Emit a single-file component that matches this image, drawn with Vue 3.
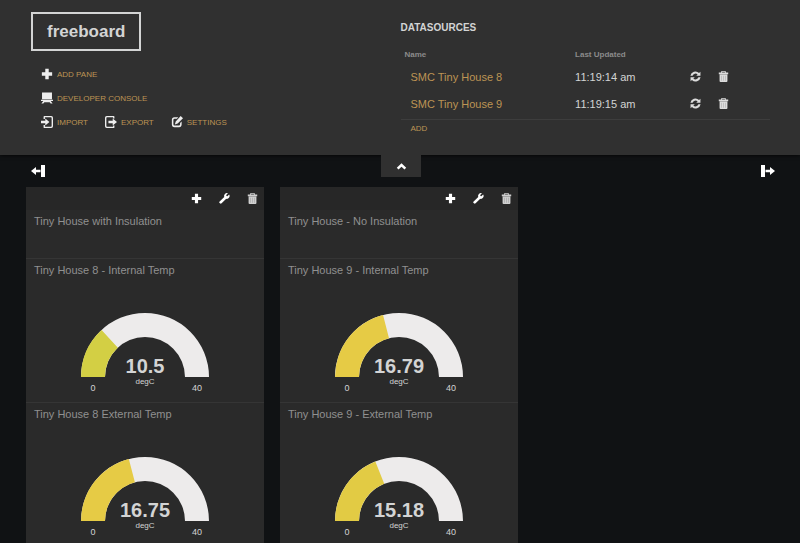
<script setup>
import { h } from 'vue'

const shapes = {
  plus: 'M5 1h4v4h4v4H9v4H5V9H1V5h4z',
  trash: 'M5 0h4a1 1 0 0 1 1 1v1h3v2H1V2h3V1a1 1 0 0 1 1-1zM5.2 1.1V2h3.6v-.9zM2 4.6h10v8.2q0 1.2-1.2 1.2H3.2Q2 14 2 12.8zM4.2 6v6.5h.2V6zm2.700 0v6.500h.2V6zm2.700 0v6.500h.2V6z',
  wrench: 'M12.9 1.9l-2.3 2.2-1.1-.3-.3-1.1L11.4.4A3.6 3.6 0 0 0 6.7 5L.8 10.700a1.500 1.500 0 0 0 0 2.100l.4.4a1.500 1.500 0 0 0 2.100 0L9.200 7.400a3.600 3.600 0 0 0 3.700-5.500z',
  refresh: 'M.5 6a6.500 6.500 0 0 1 11-3.500L13.300.8V6.200H7.900l1.800-1.800A3.800 3.800 0 0 0 3.300 6zM13.500 8a6.500 6.500 0 0 1-11 3.500L.7 13.200V7.800h5.400L4.300 9.600A3.800 3.800 0 0 0 10.700 8z',
  console: 'M1.200 .5h11.600v8H1.200zM0 9h14v1.500h-2.600L13.500 13.500h-2.200l-1.200-1.500H3.900l-1.200 1.500H.5l2.100-3H0z',
  import: 'M4 0h8q2 0 2 2v10q0 2-2 2H4q-1 0-1-1v-2.500h1.600v1.900h7q.8 0 .8-.8V2.400q0-.8-.8-.8h-7v1.900H3V1q0-1 1-1zM0 5.500h5V2.800l4.800 4.200L5 11.200V8.500H0z',
  export: 'M2 0h8q1 0 1 1v2H9.400V1.600h-7q-.8 0-.8.8v9.200q0 .8.8.8h7V11H11v2q0 1-1 1H2q-2 0-2-2V2q0-2 2-2zM4 5.500h5V2.800l5 4.200-5 4.200V8.500H4z',
  edit: 'M4 1.500h4.500L6.800 3.300H4.200Q2.800 3.300 2.800 4.700v5q0 1.500 1.400 1.500h5q1.400 0 1.400-1.500V8.300L12.400 6.500V10q0 3-3 3H4q-3 0-3-3V4.500q0-3 3-3zM11.300 0L14 2.500 7.800 8.800 4.500 10l1-3.500z',
  up: 'M7 3l6 5.500-2.200 2.200L7 7.200l-3.800 3.500L1 8.500z',
}

const Icon = (props) =>
  h('svg', { viewBox: '0 0 14 14', class: 'icon', 'aria-hidden': 'true' }, [
    h('path', { d: shapes[props.name], fill: 'currentColor', 'fill-rule': 'evenodd' }),
  ])
Icon.props = ['name']

const actions = [
  [{ icon: 'plus', label: 'ADD PANE' }],
  [{ icon: 'console', label: 'DEVELOPER CONSOLE' }],
  [
    { icon: 'import', label: 'IMPORT' },
    { icon: 'export', label: 'EXPORT' },
    { icon: 'edit', label: 'SETTINGS' },
  ],
]

const datasources = [
  { name: 'SMC Tiny House 8', updated: '11:19:14 am' },
  { name: 'SMC Tiny House 9', updated: '11:19:15 am' },
]

const panes = [
  {
    title: 'Tiny House with Insulation',
    gauges: [
      { title: 'Tiny House 8 - Internal Temp', value: 10.5, color: '#d3cf44' },
      { title: 'Tiny House 8 External Temp', value: 16.75, color: '#e6cb45' },
    ],
  },
  {
    title: 'Tiny House - No Insulation',
    gauges: [
      { title: 'Tiny House 9 - Internal Temp', value: 16.79, color: '#e6cb45' },
      { title: 'Tiny House 9 - External Temp', value: 15.18, color: '#e2cb44' },
    ],
  },
]

const MAX = 40

// Ring segment from the left end of the half circle up to the given fraction.
function arc(fraction) {
  const cx = 80
  const cy = 68
  const outer = 64
  const inner = 40
  const a = Math.PI * (1 - fraction)
  const at = (r) => `${(cx + r * Math.cos(a)).toFixed(2)} ${(cy - r * Math.sin(a)).toFixed(2)}`
  return `M${cx - outer} ${cy}A${outer} ${outer} 0 0 1 ${at(outer)}L${at(inner)}A${inner} ${inner} 0 0 0 ${cx - inner} ${cy}Z`
}
</script>

<template>
  <div class="page">
    <header class="admin">
      <div class="left">
        <h1 class="logo">freeboard</h1>
        <nav class="actions" aria-label="Board">
          <div v-for="(row, i) in actions" :key="i" class="action-row">
            <button v-for="a in row" :key="a.label" type="button" class="action">
              <Icon :name="a.icon" /><span>{{ a.label }}</span>
            </button>
          </div>
        </nav>
      </div>
      <section class="sources">
        <h2>DATASOURCES</h2>
        <table>
          <thead>
            <tr><th class="c-name">Name</th><th class="c-time">Last Updated</th><th></th></tr>
          </thead>
          <tbody>
            <tr v-for="d in datasources" :key="d.name">
              <td class="name"><a href="#">{{ d.name }}</a></td>
              <td>{{ d.updated }}</td>
              <td>
                <div class="row-tools">
                  <button type="button" :aria-label="'Refresh ' + d.name"><Icon name="refresh" /></button>
                  <button type="button" :aria-label="'Delete ' + d.name"><Icon name="trash" /></button>
                </div>
              </td>
            </tr>
          </tbody>
        </table>
        <button type="button" class="add">ADD</button>
      </section>
    </header>

    <div class="controls">
      <button type="button" class="column-left" aria-label="Remove column">
        <svg class="col-icon" viewBox="0 0 15 12" aria-hidden="true">
          <path d="M10 0h4v12h-4zM0 6l5-4v2.800h4.500v2.400H5V10z" fill="currentColor" />
        </svg>
      </button>
      <button type="button" class="toggle" aria-label="Hide header"><Icon name="up" /></button>
      <button type="button" class="column-right" aria-label="Add column">
        <svg class="col-icon" viewBox="0 0 15 12" aria-hidden="true">
          <path d="M1 0h4v12H1zM15 6l-5-4v2.800H5.500v2.400H10V10z" fill="currentColor" />
        </svg>
      </button>
    </div>

    <main class="board">
      <article v-for="p in panes" :key="p.title" class="pane">
        <div class="pane-tools">
          <button type="button" aria-label="Add widget"><Icon name="plus" /></button>
          <button type="button" aria-label="Edit pane"><Icon name="wrench" /></button>
          <button type="button" aria-label="Delete pane"><Icon name="trash" /></button>
        </div>
        <section class="widget text"><h3>{{ p.title }}</h3></section>
        <section v-for="g in p.gauges" :key="g.title" class="widget">
          <h3>{{ g.title }}</h3>
          <svg class="gauge" viewBox="0 0 160 86">
            <path :d="arc(1)" fill="#edebeb" />
            <path :d="arc(g.value / MAX)" :fill="g.color" />
            <text x="80" y="64" class="value">{{ g.value }}</text>
            <text x="80" y="75" class="unit">degC</text>
            <text x="28" y="82" class="limit">0</text>
            <text x="132" y="82" class="limit">{{ MAX }}</text>
          </svg>
        </section>
      </article>
    </main>
  </div>
</template>

<style>
body {
  background: #101214;
}
</style>

<style scoped>
.page {
  height: 100vh;
  overflow: hidden;
  font-family: "Liberation Sans", Arial, sans-serif;
  font-size: 11px;
  color: #d3d4d4;
}
h1, h2, h3 {
  margin: 0;
}
button {
  margin: 0;
  padding: 0;
  border: 0;
  background: none;
  font: inherit;
  color: #fff;
  display: flex;
  align-items: center;
  cursor: pointer;
}
.icon {
  display: block;
  width: 11px;
  height: 11px;
}
.admin {
  display: grid;
  grid-template-columns: 1fr 1fr;
  padding: 12px 30px 17px 31px;
  background: #303030;
  box-shadow: 0 0 4px #000;
}
.left {
  display: flex;
  flex-direction: column;
  align-items: flex-start;
}
.logo {
  padding: 0 14px;
  border: 2px solid #d3d4d4;
  font-size: 17px;
  line-height: 35px;
}
.actions {
  padding: 11px 0 0 10px;
}
.action-row {
  display: flex;
  gap: 17px;
  height: 24px;
}
.action {
  gap: 4px;
  font-size: 8px;
  color: #bd9454;
}
.action .icon {
  width: 12px;
  height: 12px;
  color: #eee;
}
.sources {
  padding-top: 9px;
}
.sources h2 {
  font-size: 10px;
  line-height: 14px;
}
table {
  width: 100%;
  margin-top: 10px;
  padding-bottom: 2px;
  border-spacing: 0;
  table-layout: fixed;
  border-bottom: 1px solid #3d3d3d;
}
th, td {
  padding: 0 4px;
  text-align: left;
}
th {
  height: 18px;
  font-size: 8px;
  color: #8b8b8b;
}
td {
  height: 27px;
}
.c-name {
  width: 44%;
}
.c-time {
  width: 29%;
}
td.name {
  padding-left: 10px;
}
td a {
  color: #bd9454;
  text-decoration: none;
}
.row-tools {
  display: flex;
  gap: 17px;
}
.row-tools button {
  color: #dcdcdc;
}
.add {
  padding: 0 10px;
  font-size: 8px;
  line-height: 18px;
  color: #bd9454;
}
.controls {
  display: grid;
  grid-template-columns: 1fr auto 1fr;
  align-items: start;
  padding: 0 25px 0 27px;
  height: 32px;
}
.column-left {
  justify-self: start;
  padding: 10px 0 0 4px;
}
.column-right {
  justify-self: end;
  padding-top: 10px;
}
.toggle {
  width: 40px;
  height: 22px;
  justify-content: center;
  background: #303030;
}
.col-icon {
  width: 15px;
  height: 12px;
}
.board {
  display: grid;
  grid-template-columns: repeat(3, minmax(0, 1fr));
  gap: 16px;
  padding: 0 28px 0 26px;
}
.pane {
  background: #2a2a2a;
}
.pane-tools {
  display: flex;
  justify-content: flex-end;
  gap: 17px;
  height: 23px;
  padding-right: 6px;
  background: #272727;
}
.pane-tools button:last-child {
  color: #cfcfcf;
}
.widget {
  box-sizing: border-box;
  height: 144px;
  padding: 0 8px;
  border-top: 1px solid #353535;
}
.widget.text {
  height: 48px;
  border-top: 0;
}
.widget h3 {
  font-size: 11px;
  line-height: 22px;
  font-weight: normal;
  color: #909090;
}
.gauge {
  display: block;
  width: 160px;
  height: 86px;
  margin: 28px auto 0;
}
.gauge text {
  text-anchor: middle;
  fill: #d3d4d4;
}
.gauge .value {
  font-size: 20px;
  font-weight: bold;
}
.gauge .unit {
  font-size: 8px;
}
.gauge .limit {
  font-size: 9px;
}
</style>
